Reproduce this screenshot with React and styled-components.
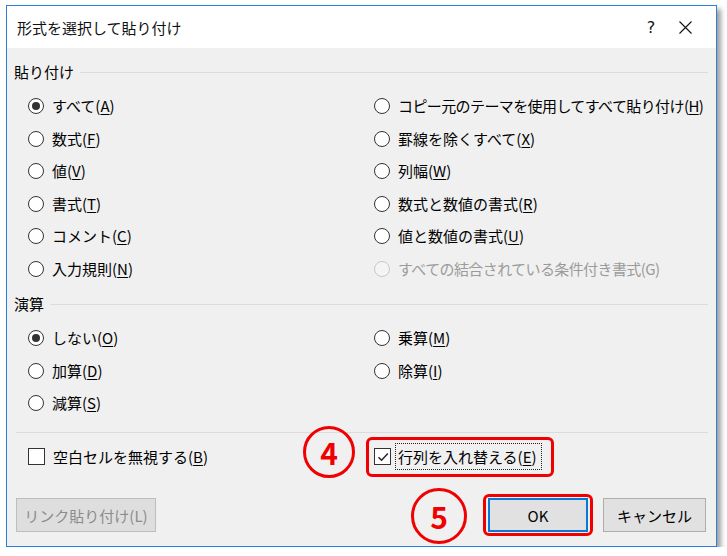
import styled, { createGlobalStyle } from "styled-components";

const GlobalStyle = createGlobalStyle`
  html, body {
    margin: 0;
    padding: 0;
    background: #ffffff;
  }
  body {
    font-family: "Noto Sans CJK JP", "Noto Sans", sans-serif;
  }
`;

const pasteLeft = [
  { label: "すべて", key: "A", checked: true },
  { label: "数式", key: "F" },
  { label: "値", key: "V" },
  { label: "書式", key: "T" },
  { label: "コメント", key: "C" },
  { label: "入力規則", key: "N" },
];

const pasteRight = [
  { label: "コピー元のテーマを使用してすべて貼り付け", key: "H" },
  { label: "罫線を除くすべて", key: "X" },
  { label: "列幅", key: "W" },
  { label: "数式と数値の書式", key: "R" },
  { label: "値と数値の書式", key: "U" },
  { label: "すべての結合されている条件付き書式", key: "G", disabled: true },
];

const opLeft = [
  { label: "しない", key: "O", checked: true },
  { label: "加算", key: "D" },
  { label: "減算", key: "S" },
];

const opRight = [
  { label: "乗算", key: "M" },
  { label: "除算", key: "I" },
];

// interleave two columns so the grid fills row by row
const zip = (a, b) => {
  const out = [];
  for (let i = 0; i < Math.max(a.length, b.length); i++) {
    out.push(a[i] || null);
    out.push(b[i] || null);
  }
  return out;
};

const Label = ({ text, accel, disabled }) => (
  <span>
    {text}(
    {disabled ? accel : <Accel>{accel}</Accel>})
  </span>
);

const Radio = ({ item }) => (
  <Option $disabled={item.disabled}>
    <RadioCircle $checked={item.checked} $disabled={item.disabled} />
    <OptionText $tight={item.label.length > 10}>
      <Label text={item.label} accel={item.key} disabled={item.disabled} />
    </OptionText>
  </Option>
);

const CloseIcon = () => (
  <svg width="13" height="13" viewBox="0 0 13 13">
    <path d="M0.5 0.5 L12.5 12.5 M12.5 0.5 L0.5 12.5" stroke="#111" strokeWidth="1.1" fill="none" />
  </svg>
);

const CheckMark = () => (
  <svg width="14" height="14" viewBox="0 0 14 14">
    <path d="M2.5 7.2 L5.6 10.3 L11.8 3.6" stroke="#222" strokeWidth="1.4" fill="none" />
  </svg>
);

const App = () => {
  return (
    <>
      <GlobalStyle />
      <Window>
        <TitleBar>
          <Title>形式を選択して貼り付け</Title>
          <TitleButton>?</TitleButton>
          <TitleButton>
            <CloseIcon />
          </TitleButton>
        </TitleBar>
        <Body>
          <SectionHeader>
            <span>貼り付け</span>
            <Rule />
          </SectionHeader>
          <OptionGrid>
            {zip(pasteLeft, pasteRight).map((item, i) =>
              item ? <Radio key={i} item={item} /> : <span key={i} />
            )}
          </OptionGrid>

          <SectionHeader $second>
            <span>演算</span>
            <Rule />
          </SectionHeader>
          <OptionGrid>
            {zip(opLeft, opRight).map((item, i) =>
              item ? <Radio key={i} item={item} /> : <span key={i} />
            )}
          </OptionGrid>

          <Separator />

          <CheckRow>
            <Option>
              <CheckBox />
              <OptionText>
                空白セルを無視する(<Accel>B</Accel>)
              </OptionText>
            </Option>
            <Highlight>
              <Badge $size={52} $right={19} $top={-16}>4</Badge>
              <CheckBox>
                <CheckMark />
              </CheckBox>
              <FocusText>
                行列を入れ替える(<Accel>E</Accel>)
              </FocusText>
            </Highlight>
          </CheckRow>

          <ButtonRow>
            <Button $width={140} disabled>
              リンク貼り付け(L)
            </Button>
            <RightButtons>
              <MarkedButton>
                <Badge $size={56} $right={21} $top={-10}>5</Badge>
                <Button $width={100} $primary>
                  OK
                </Button>
              </MarkedButton>
              <Button $width={103}>キャンセル</Button>
            </RightButtons>
          </ButtonRow>
        </Body>
      </Window>
    </>
  );
};

export default App;

const Window = styled.div`
  box-sizing: border-box;
  width: 711px;
  height: 542px;
  margin: 5px 0 0 6px;
  border: 1px solid #2a80d8;
  background: #f0f0f0;
  box-shadow: 4px 4px 5px rgba(0, 0, 0, 0.38);
  display: flex;
  flex-direction: column;
  font-size: 15px;
  color: #000;
`;

const TitleBar = styled.div`
  height: 42px;
  flex-shrink: 0;
  background: #ffffff;
  display: flex;
  align-items: center;
  padding: 0 16px 0 10px;
`;

const Title = styled.div`
  flex: 1;
  font-size: 15px;
  color: #111;
`;

const TitleButton = styled.div`
  width: 30px;
  height: 30px;
  display: flex;
  align-items: center;
  justify-content: center;
  font-family: "DejaVu Sans", sans-serif;
  font-size: 16px;
  color: #111;
  & + & {
    margin-left: 4px;
  }
`;

const Body = styled.div`
  flex: 1;
  display: flex;
  flex-direction: column;
  padding: 13px 8px 14px 7px;
`;

const SectionHeader = styled.div`
  display: flex;
  align-items: center;
  height: 20px;
  margin-top: ${(p) => (p.$second ? "8px" : "0")};
`;

const Rule = styled.div`
  flex: 1;
  height: 1px;
  background: #dcdcdc;
  margin-left: 6px;
  margin-top: 2px;
`;

const OptionGrid = styled.div`
  display: grid;
  grid-template-columns: 346px 1fr;
  grid-auto-rows: 32.5px;
  padding-left: 14px;
  margin-top: 9px;
`;

const Option = styled.div`
  display: flex;
  align-items: center;
  color: ${(p) => (p.$disabled ? "#9b9b9b" : "#000")};
  white-space: nowrap;
`;

const RadioCircle = styled.span`
  box-sizing: border-box;
  width: 16px;
  height: 16px;
  border-radius: 50%;
  border: 1px solid ${(p) => (p.$disabled ? "#c8c8c8" : "#333")};
  background: ${(p) => (p.$disabled ? "#f4f4f4" : "#fff")};
  display: flex;
  align-items: center;
  justify-content: center;
  flex-shrink: 0;
  &::after {
    content: "";
    width: 8px;
    height: 8px;
    border-radius: 50%;
    background: #333;
    display: ${(p) => (p.$checked ? "block" : "none")};
  }
`;

const OptionText = styled.span`
  margin-left: 8px;
  line-height: 20px;
  letter-spacing: ${(p) => (p.$tight ? "-0.6px" : "0")};
`;

const Accel = styled.u`
  text-decoration-thickness: 1px;
  text-underline-offset: 2px;
`;

const Separator = styled.div`
  height: 1px;
  background: #dcdcdc;
  margin: 12px 0 0 2px;
`;

const CheckRow = styled.div`
  display: grid;
  grid-template-columns: 346px 1fr;
  height: 30px;
  padding-left: 14px;
  margin-top: 9px;
`;

const CheckBox = styled.span`
  box-sizing: border-box;
  width: 17px;
  height: 17px;
  border: 1px solid #333;
  background: #fff;
  display: flex;
  align-items: center;
  justify-content: center;
  flex-shrink: 0;
`;

const Highlight = styled.div`
  position: relative;
  justify-self: start;
  display: flex;
  align-items: center;
  &::after {
    content: "";
    position: absolute;
    top: -5px;
    bottom: -5px;
    left: -8px;
    right: -13px;
    border: 3px solid #f00000;
    border-radius: 6px;
    pointer-events: none;
  }
`;

const FocusText = styled.span`
  margin-left: 5px;
  padding: 3px 4px 3px 2px;
  line-height: 19px;
  outline: 1px dotted #222;
  white-space: nowrap;
`;

const Badge = styled.div`
  position: absolute;
  box-sizing: border-box;
  right: calc(100% + ${(p) => p.$right}px);
  top: ${(p) => p.$top}px;
  width: ${(p) => p.$size}px;
  height: ${(p) => p.$size}px;
  border: 3px solid #f00000;
  border-radius: 50%;
  display: flex;
  align-items: center;
  justify-content: center;
  font-family: "Noto Sans CJK JP", "Noto Sans", sans-serif;
  font-weight: 700;
  font-size: 30px;
  line-height: 1;
  color: #f00000;
`;

const ButtonRow = styled.div`
  margin-top: auto;
  display: flex;
  justify-content: space-between;
  align-items: center;
  padding: 0 2px;
`;

const RightButtons = styled.div`
  display: flex;
  gap: 15px;
`;

const MarkedButton = styled.div`
  position: relative;
  display: flex;
  &::after {
    content: "";
    position: absolute;
    top: -4px;
    bottom: -4px;
    left: -5px;
    right: -5px;
    border: 3px solid #f00000;
    border-radius: 6px;
    pointer-events: none;
  }
`;

const Button = styled.button`
  box-sizing: border-box;
  width: ${(p) => p.$width}px;
  height: 34px;
  margin: 0;
  padding: 0;
  font-family: "Noto Sans CJK JP", "Noto Sans", sans-serif;
  font-size: 15px;
  color: #000;
  background: #e1e1e1;
  border: ${(p) => (p.$primary ? "2px solid #0a78d6" : "1px solid #adadad")};
  border-radius: 0;
  &:disabled {
    background: #dedede;
    border-color: #bdbdbd;
    color: #8c8c8c;
  }
`;
